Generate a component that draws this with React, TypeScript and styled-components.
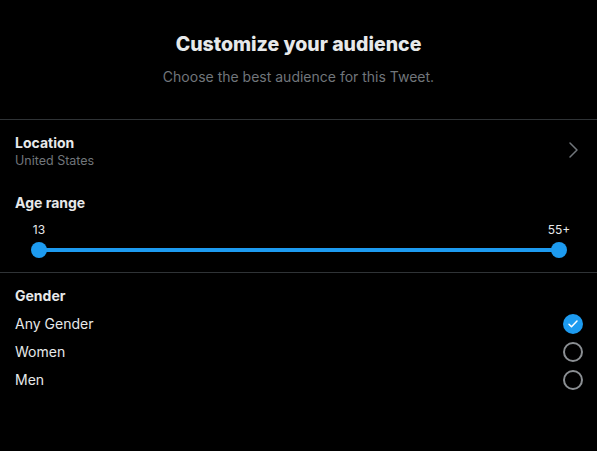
import React from "react";
import styled, { createGlobalStyle } from "styled-components";

const Global = createGlobalStyle`
  html, body { margin: 0; padding: 0; background: #000; }
  body { font-family: Inter, "Noto Sans", sans-serif; color: #e7e9ea; -webkit-font-smoothing: antialiased; }
  * { box-sizing: border-box; }
`;

const Page = styled.div`
  width: 597px;
  height: 451px;
  background: #000;
  display: flex;
  flex-direction: column;
`;

const Header = styled.header`
  display: flex;
  flex-direction: column;
  align-items: center;
  padding: 32px 16px 0;
  height: 120px;
  border-bottom: 1px solid #2f3336;
`;

const Title = styled.h1`
  margin: 0;
  font-size: 19.5px;
  line-height: 24px;
  font-weight: 800;
  color: #e7e9ea;
`;

const Subtitle = styled.p`
  margin: 11px 0 0;
  font-size: 14px;
  line-height: 20px;
  color: #71767b;
`;

const Section = styled.section<{ $bordered?: boolean }>`
  display: flex;
  flex-direction: column;
  padding: 0 16px 0 15px;
  border-bottom: ${(p) => (p.$bordered ? "1px solid #2f3336" : "none")};
`;

const LocationRow = styled.div`
  display: flex;
  align-items: center;
  justify-content: space-between;
  padding-top: 14px;
  height: 48px;
`;

const LabelBlock = styled.div`
  display: flex;
  flex-direction: column;
`;

const Label = styled.div`
  font-size: 14px;
  line-height: 18px;
  font-weight: 700;
  color: #e7e9ea;
`;

const Sub = styled.div`
  font-size: 12.5px;
  line-height: 17px;
  color: #71767b;
`;

const Chevron = styled.svg`
  width: 24px;
  height: 24px;
  color: #71767b;
  margin-right: -4px;
  margin-top: -2px;
`;

const AgeHeader = styled.div`
  padding-top: 26px;
  height: 50px;
`;

const Slider = styled.div`
  position: relative;
  height: 54px;
  margin: 0 22px 0 24px;
`;

const Track = styled.div`
  position: absolute;
  left: 0;
  right: 0;
  top: 30px;
  height: 4px;
  background: #1d9bf0;
  border-radius: 2px;
`;

const Thumb = styled.div<{ $pos: "start" | "end" }>`
  position: absolute;
  top: 24px;
  ${(p) => (p.$pos === "start" ? "left: -8px;" : "right: -8px;")}
  width: 16px;
  height: 16px;
  border-radius: 50%;
  background: #1d9bf0;
`;

const ThumbLabel = styled.span<{ $pos: "start" | "end" }>`
  position: absolute;
  top: 4px;
  ${(p) => (p.$pos === "start" ? "left: 0; transform: translateX(-50%);" : "right: 0; transform: translateX(50%);")}
  font-size: 12px;
  line-height: 16px;
  color: #e7e9ea;
`;

const GenderHeader = styled.div`
  padding-top: 14px;
  height: 37px;
`;

const OptionRow = styled.div`
  display: flex;
  align-items: center;
  justify-content: space-between;
  height: 28px;
`;

const OptionText = styled.span`
  font-size: 14px;
  line-height: 18px;
  color: #e7e9ea;
`;

const Radio = styled.span<{ $checked?: boolean }>`
  width: 20px;
  height: 20px;
  border-radius: 50%;
  margin-right: -2px;
  display: flex;
  align-items: center;
  justify-content: center;
  border: ${(p) => (p.$checked ? "none" : "2px solid #8b8f93")};
  background: ${(p) => (p.$checked ? "#1d9bf0" : "transparent")};
`;

const options = [
  { label: "Any Gender", checked: true },
  { label: "Women", checked: false },
  { label: "Men", checked: false },
];

export default function App() {
  return (
    <>
      <Global />
      <Page>
        <Header>
          <Title>Customize your audience</Title>
          <Subtitle>Choose the best audience for this Tweet.</Subtitle>
        </Header>
        <Section $bordered>
          <LocationRow>
            <LabelBlock>
              <Label>Location</Label>
              <Sub>United States</Sub>
            </LabelBlock>
            <Chevron viewBox="0 0 24 24" fill="none">
              <path d="M9 5l7 7-7 7" stroke="currentColor" strokeWidth="1.5" strokeLinecap="round" strokeLinejoin="round" />
            </Chevron>
          </LocationRow>
          <AgeHeader>
            <Label>Age range</Label>
          </AgeHeader>
          <Slider>
            <ThumbLabel $pos="start">13</ThumbLabel>
            <ThumbLabel $pos="end">55+</ThumbLabel>
            <Track />
            <Thumb $pos="start" />
            <Thumb $pos="end" />
          </Slider>
        </Section>
        <Section>
          <GenderHeader>
            <Label>Gender</Label>
          </GenderHeader>
          {options.map((o) => (
            <OptionRow key={o.label}>
              <OptionText>{o.label}</OptionText>
              <Radio $checked={o.checked}>
                {o.checked && (
                  <svg width="12" height="12" viewBox="0 0 24 24" fill="none">
                    <path d="M4 12.5l5 5L20 6" stroke="#fff" strokeWidth="3" strokeLinecap="round" strokeLinejoin="round" />
                  </svg>
                )}
              </Radio>
            </OptionRow>
          ))}
        </Section>
      </Page>
    </>
  );
}
